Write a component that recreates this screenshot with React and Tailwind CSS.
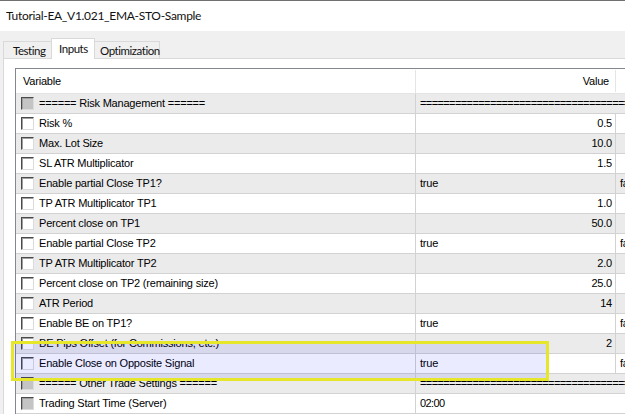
import React from "react";

const EQ = "================================================================";

const rows = [
  { name: "====== Risk Management ======", section: true, value: EQ, span: true },
  { name: "Risk %", value: "0.5" },
  { name: "Max. Lot Size", value: "10.0" },
  { name: "SL ATR Multiplicator", value: "1.5" },
  { name: "Enable partial Close TP1?", value: "true", align: "left", third: "false" },
  { name: "TP ATR Multiplicator TP1", value: "1.0" },
  { name: "Percent close on TP1", value: "50.0" },
  { name: "Enable partial Close TP2", value: "true", align: "left", third: "false" },
  { name: "TP ATR Multiplicator TP2", value: "2.0" },
  { name: "Percent close on TP2 (remaining size)", value: "25.0" },
  { name: "ATR Period", value: "14" },
  { name: "Enable BE on TP1?", value: "true", align: "left", third: "false" },
  { name: "BE Pips Offset (for Commissions, etc.)", value: "2" },
  { name: "Enable Close on Opposite Signal", value: "true", align: "left", third: "false" },
  { name: "====== Other Trade Settings ======", section: true, value: EQ, span: true },
  { name: "Trading Start Time (Server)", value: "02:00", span: true, grayBox: true },
];

function Check({ gray }) {
  return (
    <div
      className={
        "w-[13px] h-[13px] shrink-0 border border-t-[#4a4a4a] border-l-[#4a4a4a] border-r-[#dcdcdc] border-b-[#dcdcdc] shadow-[inset_1px_1px_0_#a0a0a0] " +
        (gray ? "bg-[#c4c4c4]" : "bg-white")
      }
    />
  );
}

export default function App() {
  return (
    <div
      className="relative w-[625px] h-[414px] overflow-hidden bg-white text-[#000]"
      style={{ fontFamily: '"Liberation Sans", Arial, sans-serif' }}
    >
      {/* title bar */}
      <div
        className="h-[31px] border-t border-[#707070] flex items-center pl-[6px] pb-[1px] text-[12px] tracking-[-0.3px] text-[#111]"
        style={{ fontFamily: 'Lato, "Liberation Sans", sans-serif' }}
      >
        Tutorial-EA_V1.021_EMA-STO-Sample
      </div>

      {/* tab band */}
      <div className="bg-[#f0f0f0] pl-[3px] h-[383px] flex flex-col">
        <div
          className="h-[27px] flex items-end text-[11.5px] tracking-[-0.45px] text-[#111]"
          style={{ fontFamily: 'Lato, "Liberation Sans", sans-serif' }}
        >
          <div className="w-[48px] h-[17px] border-t border-l border-[#d9d9d9] bg-[#f0f0f0] flex items-center pl-[9px] pt-[1px]">
            Testing
          </div>
          <div className="relative z-10 w-[44px] h-[21px] -mb-px border-t border-l border-r border-[#d9d9d9] bg-white flex items-start pl-[7px] pt-[1px]">
            Inputs
          </div>
          <div className="w-[65px] h-[17px] border-t border-r border-[#d9d9d9] bg-[#f0f0f0] flex items-center pl-[5px] pt-[1px]">
            Optimization
          </div>
        </div>

        {/* panel */}
        <div className="flex-1 border-t border-l border-[#d9d9d9] bg-white pt-[9px] pl-[11px]">
          <div className="border-t border-l border-[#828790] text-[11px] tracking-[-0.2px]">
            {/* header */}
            <div className="flex h-[25px] border-b border-[#e3e3e3]">
              <div className="w-[400px] shrink-0 flex items-center pl-[7px] pt-[1px]">
                <span className="border-r border-[#e5e5e5] h-[23px] flex-1 flex items-center">Variable</span>
              </div>
              <div className="w-[200px] shrink-0 flex items-center justify-end pr-[6px] border-r border-[#e5e5e5] my-[1px]">
                Value
              </div>
              <div className="flex-1" />
            </div>

            {rows.map((r, i) => {
              const gray = i % 2 === 0;
              const bg = gray ? "bg-[#ebebeb]" : "bg-white";
              return (
                <div key={i} className={"flex h-[20px] border-b border-[#d2d2d2] " + bg}>
                  <div className="w-[400px] shrink-0 flex items-center pl-[5px] gap-[5px] border-r border-[#d2d2d2] whitespace-nowrap">
                    <Check gray={r.section || r.grayBox} />
                    <span>{r.name}</span>
                  </div>
                  {r.span ? (
                    <div className="flex-1 min-w-0 flex items-center pl-[4px] overflow-hidden whitespace-nowrap tracking-[-0.6px]">
                      {r.value}
                    </div>
                  ) : (
                    <>
                      <div
                        className={
                          "w-[200px] shrink-0 flex items-center border-r border-[#d2d2d2] overflow-hidden whitespace-nowrap " +
                          (r.align === "left" ? "justify-start pl-[4px]" : "justify-end pr-[3px]")
                        }
                      >
                        {r.value}
                      </div>
                      <div className="flex-1 min-w-0 flex items-center pl-[4px] overflow-hidden whitespace-nowrap">
                        {r.third || ""}
                      </div>
                    </>
                  )}
                </div>
              );
            })}
          </div>
        </div>
      </div>

      {/* highlight annotation */}
      <div className="absolute left-[11px] top-[341px] w-[538px] h-[40px] border-[3px] border-[#e6e62a] bg-[rgba(0,0,255,0.08)]" />
    </div>
  );
}
